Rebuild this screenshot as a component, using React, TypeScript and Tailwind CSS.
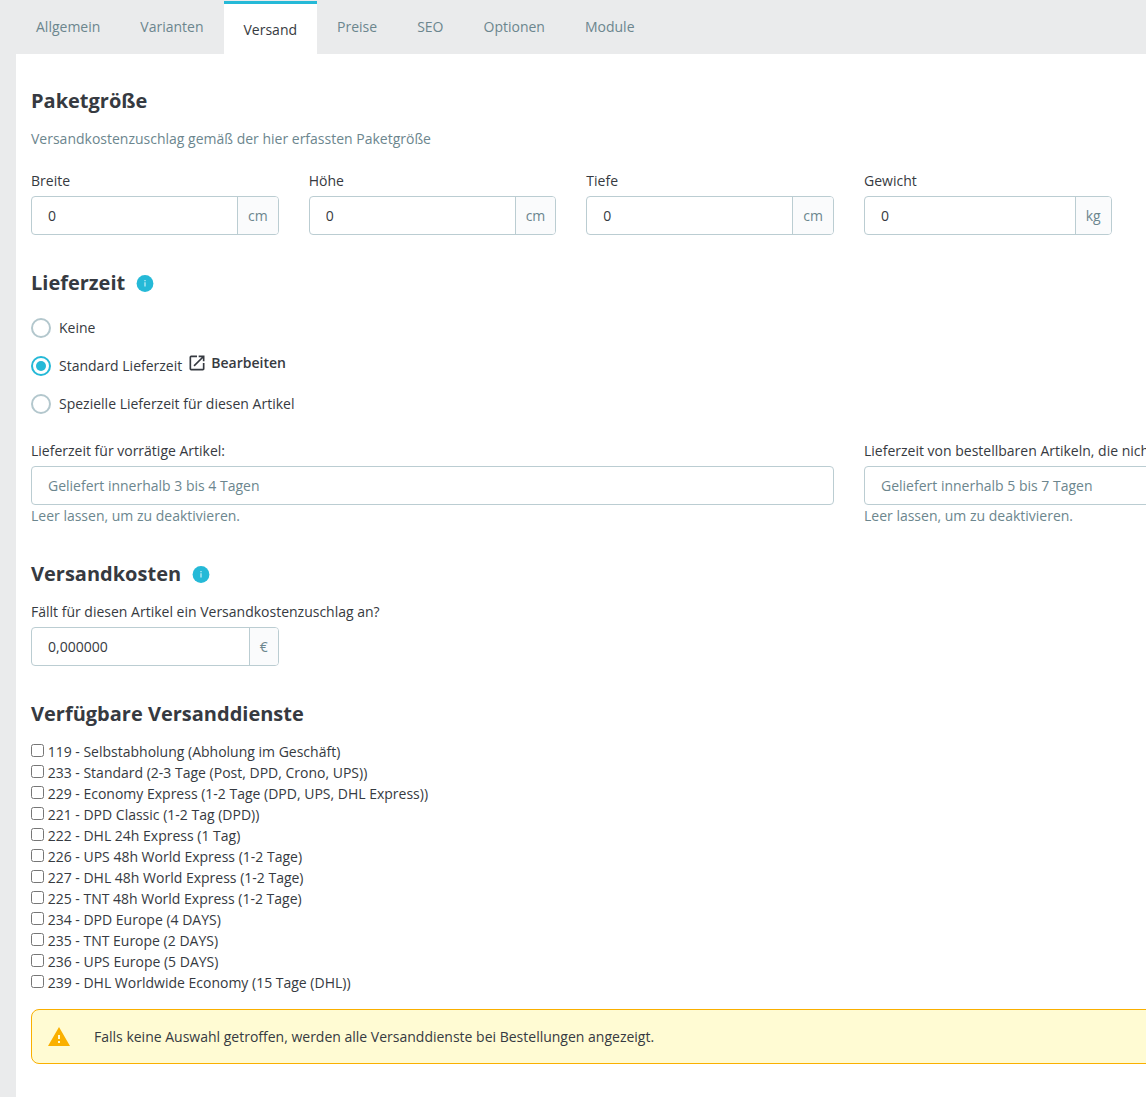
import { useState, ReactNode } from "react";
import { clsx } from "clsx";

interface Carrier {
  id: number;
  name: string;
  delay: string;
}

interface Dimension {
  id: string;
  label: string;
  unit: string;
}

const TABS = ["Allgemein", "Varianten", "Versand", "Preise", "SEO", "Optionen", "Module"];
const ACTIVE_TAB = "Versand";

const DIMENSIONS: Dimension[] = [
  { id: "width", label: "Breite", unit: "cm" },
  { id: "height", label: "Höhe", unit: "cm" },
  { id: "depth", label: "Tiefe", unit: "cm" },
  { id: "weight", label: "Gewicht", unit: "kg" },
];

const CARRIERS: Carrier[] = [
  { id: 119, name: "Selbstabholung", delay: "Abholung im Geschäft" },
  { id: 233, name: "Standard", delay: "2-3 Tage (Post, DPD, Crono, UPS)" },
  { id: 229, name: "Economy Express", delay: "1-2 Tage (DPD, UPS, DHL Express)" },
  { id: 221, name: "DPD Classic", delay: "1-2 Tag (DPD)" },
  { id: 222, name: "DHL 24h Express", delay: "1 Tag" },
  { id: 226, name: "UPS 48h World Express", delay: "1-2 Tage" },
  { id: 227, name: "DHL 48h World Express", delay: "1-2 Tage" },
  { id: 225, name: "TNT 48h World Express", delay: "1-2 Tage" },
  { id: 234, name: "DPD Europe", delay: "4 DAYS" },
  { id: 235, name: "TNT Europe", delay: "2 DAYS" },
  { id: 236, name: "UPS Europe", delay: "5 DAYS" },
  { id: 239, name: "DHL Worldwide Economy", delay: "15 Tage (DHL)" },
];

const fieldClass = "rounded border border-[#bbcdd2] bg-white";

function Heading({ children, info }: { children: ReactNode; info?: string }) {
  return (
    <div className="flex h-6 items-center gap-[10px]">
      <h2 className="text-xl leading-6 font-bold">{children}</h2>
      {info && (
        <button type="button" aria-label={info}>
          <svg className="size-5" viewBox="0 0 20 20">
            <circle cx="10" cy="10.5" r="8.4" fill="#25b9d7" />
            <path d="M9.300 7h1.400v1.200h-1.400zM9.300 9.200h1.400v4.400h-1.400z" fill="#b5e8f2" />
          </svg>
        </button>
      )}
    </div>
  );
}

function UnitField({ id, label, unit, initial }: { id: string; label: string; unit: string; initial: string }) {
  const [value, setValue] = useState(initial);
  return (
    <div>
      <label htmlFor={id} className="mb-[5px] block whitespace-nowrap">
        {label}
      </label>
      <div className={clsx("flex h-[39px] overflow-hidden", fieldClass)}>
        <input
          id={id}
          type="text"
          className="w-full min-w-0 flex-1 px-4 outline-none"
          value={value}
          onChange={(e) => setValue(e.target.value)}
        />
        <span className="flex items-center border-l border-[#bbcdd2] bg-[#fafbfc] px-[10px] text-[#6c868e]">{unit}</span>
      </div>
    </div>
  );
}

function DeliveryField({ id, label, placeholder }: { id: string; label: string; placeholder: string }) {
  return (
    <div className="col-span-3">
      <label htmlFor={id} className="mb-[5px] block">
        {label}
      </label>
      <input
        id={id}
        type="text"
        placeholder={placeholder}
        className={clsx("block h-[39px] w-full px-4 outline-none placeholder:text-[#6c868e]", fieldClass)}
      />
      <p className="text-[#6c868e]">Leer lassen, um zu deaktivieren.</p>
    </div>
  );
}

function DeliveryTimes() {
  const [mode, setMode] = useState("standard");
  const options = [
    { id: "none", label: "Keine" },
    { id: "standard", label: "Standard Lieferzeit" },
    { id: "special", label: "Spezielle Lieferzeit für diesen Artikel" },
  ];

  return (
    <div className="mt-[23px] flex flex-col gap-[18px] leading-5">
      {options.map((o) => (
        <div key={o.id} className="flex h-5 items-center gap-[5px]">
          <label className="flex items-center gap-2">
            <input
              type="radio"
              name="delivery-time"
              checked={mode === o.id}
              onChange={() => setMode(o.id)}
              className="size-5 appearance-none rounded-full border-2 border-[#b3c7cd] bg-clip-content p-[3px] checked:border-[#25b9d7] checked:bg-[#25b9d7]"
            />
            {o.label}
          </label>
          {o.id === "standard" && (
            <a href="#delivery" className="flex items-center gap-1 pb-[7px] font-semibold">
              <svg className="size-5" viewBox="0 0 24 24" fill="currentColor">
                <path d="M19 19H5V5h7V3H5a2 2 0 0 0-2 2v14a2 2 0 0 0 2 2h14c1.100 0 2-.9 2-2v-7h-2v7zM14 3v2h3.590l-9.830 9.830 1.410 1.410L19 6.410V10h2V3h-7z" />
              </svg>
              Bearbeiten
            </a>
          )}
        </div>
      ))}
    </div>
  );
}

export default function App() {
  const [selected, setSelected] = useState<number[]>([]);

  function toggleCarrier(id: number) {
    setSelected((prev) => (prev.includes(id) ? prev.filter((c) => c !== id) : [...prev, id]));
  }

  return (
    <div className="min-h-screen overflow-x-hidden bg-[#eaebec] pl-4 font-['Open_Sans',sans-serif] text-sm leading-[21px] text-[#363a41]">
      <nav className="flex pt-px">
        {TABS.map((tab) => (
          <a
            key={tab}
            href={`#${tab.toLowerCase()}`}
            className={clsx(
              "px-5 pt-[15px]",
              tab === ACTIVE_TAB ? "border-t-3 border-[#25b9d7] bg-white pb-[14px]" : "pb-[17px] text-[#6c868e]"
            )}
          >
            {tab}
          </a>
        ))}
      </nav>

      <main className="min-h-[calc(100vh-54px)] min-w-[1666px] bg-white px-[15px] pt-[35px] pb-8">
        <section>
          <Heading>Paketgröße</Heading>
          <p className="mt-[15px] mb-[21px] text-[#6c868e]">Versandkostenzuschlag gemäß der hier erfassten Paketgröße</p>
          <div className="grid grid-cols-6 gap-[30px]">
            {DIMENSIONS.map((d) => (
              <UnitField key={d.id} id={d.id} label={d.label} unit={d.unit} initial="0" />
            ))}
          </div>
        </section>

        <section className="mt-9">
          <Heading info="Hilfe zur Lieferzeit">Lieferzeit</Heading>
          <DeliveryTimes />
          <div className="mt-[26px] grid grid-cols-6 gap-[30px]">
            <DeliveryField
              id="in-stock"
              label="Lieferzeit für vorrätige Artikel:"
              placeholder="Geliefert innerhalb 3 bis 4 Tagen"
            />
            <DeliveryField
              id="out-of-stock"
              label="Lieferzeit von bestellbaren Artikeln, die nicht vorrätig sind:"
              placeholder="Geliefert innerhalb 5 bis 7 Tagen"
            />
          </div>
        </section>

        <section className="mt-9">
          <Heading info="Hilfe zu den Versandkosten">Versandkosten</Heading>
          <div className="mt-[15px] grid grid-cols-6 gap-[30px]">
            <UnitField
              id="extra-cost"
              label="Fällt für diesen Artikel ein Versandkostenzuschlag an?"
              unit="€"
              initial="0,000000"
            />
          </div>
        </section>

        <section className="mt-9">
          <Heading>Verfügbare Versanddienste</Heading>
          <div className="mt-[15px]">
            {CARRIERS.map((c) => (
              <label key={c.id} className="block">
                <input type="checkbox" checked={selected.includes(c.id)} onChange={() => toggleCarrier(c.id)} />{" "}
                {`${c.id} - ${c.name} (${c.delay})`}
              </label>
            ))}
          </div>
        </section>

        <div
          role="alert"
          className="mt-4 flex h-[55px] items-center gap-[23px] rounded-lg border border-[#fab000] bg-[#fffbd3] px-[15px]"
        >
          <svg className="size-6" viewBox="0 0 24 24" fill="#fab000">
            <path d="M1 21h22L12 2 1 21zm12-3h-2v-2h2v2zm0-4h-2v-4h2v4z" />
          </svg>
          <p>Falls keine Auswahl getroffen, werden alle Versanddienste bei Bestellungen angezeigt.</p>
        </div>
      </main>
    </div>
  );
}
